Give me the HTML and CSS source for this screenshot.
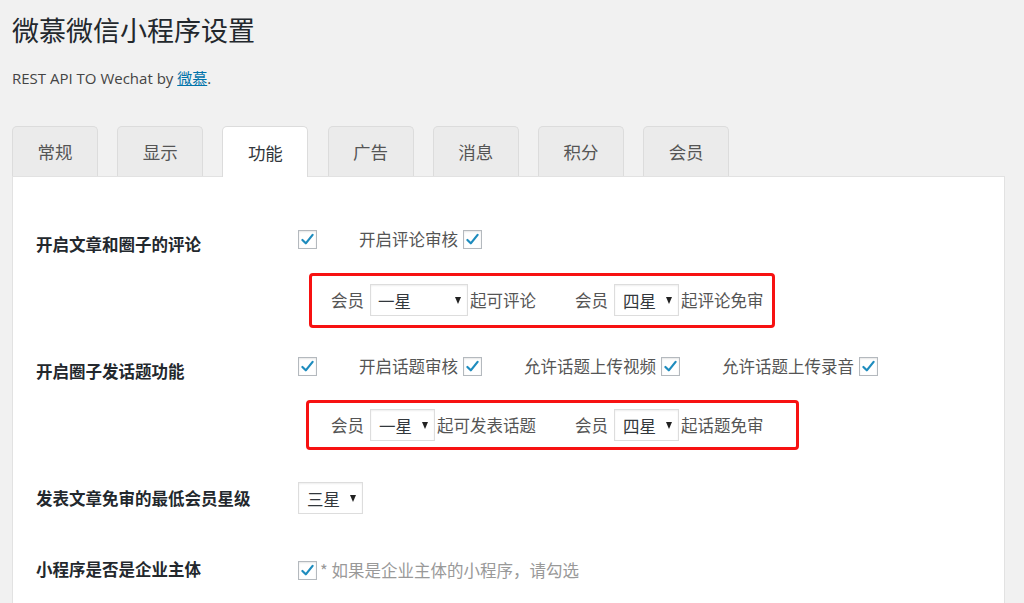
FILE: index.html
```html
<!DOCTYPE html>
<html>

<head>
    <meta charset="utf-8">
    <title>微慕微信小程序设置</title>
    <link rel="stylesheet" href="styles.css">
</head>

<body>
    <div class="wrap">
        <h1 class="page-title">微慕微信小程序设置</h1>
        <p class="page-sub">REST API TO Wechat by <a href="#">微慕</a>.</p>

        <div class="tabs">
            <div class="tab">常规</div>
            <div class="tab">显示</div>
            <div class="tab tab-active">功能</div>
            <div class="tab">广告</div>
            <div class="tab">消息</div>
            <div class="tab">积分</div>
            <div class="tab">会员</div>
        </div>

        <div class="panel">
            <!-- 评论 -->
            <div class="form-row row-comment">
                <div class="form-label">开启文章和圈子的评论</div>
                <div class="form-field">
                    <div class="field-line">
                        <span class="checkbox"><svg viewBox="0 0 20 20" width="17" height="17"><path d="M4 10.5 L8 14.5 L16 4.5" fill="none" stroke="#1e8cbe" stroke-width="2.6" stroke-linecap="round" stroke-linejoin="round"/></svg></span>
                        <span class="opt">开启评论审核<span class="checkbox"><svg viewBox="0 0 20 20" width="17" height="17"><path d="M4 10.5 L8 14.5 L16 4.5" fill="none" stroke="#1e8cbe" stroke-width="2.6" stroke-linecap="round" stroke-linejoin="round"/></svg></span></span>
                    </div>
                    <div class="mark mark-one">
                        <div class="member">会员<span class="select sel-wide"><span>一星</span><i class="arrow"></i></span>起可评论</div>
                        <div class="member">会员<span class="select"><span>四星</span><i class="arrow"></i></span>起评论免审</div>
                    </div>
                </div>
            </div>

            <!-- 话题 -->
            <div class="form-row row-topic">
                <div class="form-label">开启圈子发话题功能</div>
                <div class="form-field">
                    <div class="field-line">
                        <span class="checkbox"><svg viewBox="0 0 20 20" width="17" height="17"><path d="M4 10.5 L8 14.5 L16 4.5" fill="none" stroke="#1e8cbe" stroke-width="2.6" stroke-linecap="round" stroke-linejoin="round"/></svg></span>
                        <span class="opt">开启话题审核<span class="checkbox"><svg viewBox="0 0 20 20" width="17" height="17"><path d="M4 10.5 L8 14.5 L16 4.5" fill="none" stroke="#1e8cbe" stroke-width="2.6" stroke-linecap="round" stroke-linejoin="round"/></svg></span></span>
                        <span class="opt">允许话题上传视频<span class="checkbox"><svg viewBox="0 0 20 20" width="17" height="17"><path d="M4 10.5 L8 14.5 L16 4.5" fill="none" stroke="#1e8cbe" stroke-width="2.6" stroke-linecap="round" stroke-linejoin="round"/></svg></span></span>
                        <span class="opt">允许话题上传录音<span class="checkbox"><svg viewBox="0 0 20 20" width="17" height="17"><path d="M4 10.5 L8 14.5 L16 4.5" fill="none" stroke="#1e8cbe" stroke-width="2.6" stroke-linecap="round" stroke-linejoin="round"/></svg></span></span>
                    </div>
                    <div class="mark mark-two">
                        <div class="member">会员<span class="select"><span>一星</span><i class="arrow"></i></span>起可发表话题</div>
                        <div class="member">会员<span class="select"><span>四星</span><i class="arrow"></i></span>起话题免审</div>
                    </div>
                </div>
            </div>

            <!-- 免审 -->
            <div class="form-row row-level">
                <div class="form-label">发表文章免审的最低会员星级</div>
                <div class="form-field">
                    <span class="select"><span>三星</span><i class="arrow"></i></span>
                </div>
            </div>

            <!-- 企业主体 -->
            <div class="form-row row-company">
                <div class="form-label">小程序是否是企业主体</div>
                <div class="form-field">
                    <div class="field-line">
                        <span class="checkbox"><svg viewBox="0 0 20 20" width="17" height="17"><path d="M4 10.5 L8 14.5 L16 4.5" fill="none" stroke="#1e8cbe" stroke-width="2.6" stroke-linecap="round" stroke-linejoin="round"/></svg></span>
                        <span class="desc">* 如果是企业主体的小程序，请勾选</span>
                    </div>
                </div>
            </div>
        </div>
    </div>
</body>

</html>
```

FILE: styles.css
```css
html,
body {
    margin: 0;
    padding: 0;
    background: #f1f1f1;
    height: 100%;
    overflow: hidden;
}

body {
    font-family: "Noto Sans CJK SC", "Noto Sans", sans-serif;
    color: #444;
}

.wrap {
    padding: 12px 0 0 12px;
}

.page-title {
    margin: 0;
    font-size: 27px;
    font-weight: 400;
    line-height: 36px;
    color: #23282d;
}

.page-sub {
    margin: 19px 0 0;
    font-size: 15px;
    line-height: 22px;
    color: #444;
    font-family: "Open Sans", "Noto Sans CJK SC", sans-serif;
}

.page-sub a {
    color: #0073aa;
}

.tabs {
    display: flex;
    gap: 19.2px;
    margin-top: 37px;
    position: relative;
    z-index: 1;
}

.tab {
    width: 86px;
    height: 50px;
    box-sizing: border-box;
    border: 1px solid #dcdcdc;
    border-bottom: none;
    border-radius: 5px 5px 0 0;
    background: #ebebeb;
    color: #555;
    font-size: 17.5px;
    display: flex;
    align-items: center;
    justify-content: center;
}

.tab-active {
    background: #fff;
    height: 51px;
    margin-bottom: -1px;
    color: #32373c;
}

.panel {
    width: 993px;
    box-sizing: border-box;
    background: #fff;
    border: 1px solid #e2e2e2;
    border-bottom: none;
    padding-top: 50px;
    height: 600px;
}

.form-row {
    display: flex;
}

.form-label {
    width: 285px;
    box-sizing: border-box;
    padding-left: 23px;
    font-size: 16.5px;
    font-weight: 700;
    line-height: 24px;
    color: #23282d;
}

.form-field {
    font-size: 16.5px;
    color: #555;
}

.field-line {
    display: flex;
    align-items: center;
    height: 24px;
}

.row-comment .form-label,
.row-topic .form-label {
    padding-top: 4.5px;
}

.row-topic {
    margin-top: 26px;
}

.row-level {
    margin-top: 32px;
}

.row-level .form-label {
    padding-top: 4px;
}

.row-level .select {
    margin-left: 0;
}

.row-company {
    margin-top: 44px;
}

.row-company .form-label {
    margin-top: -1px;
}

.checkbox {
    width: 19px;
    height: 19px;
    box-sizing: border-box;
    border: 1px solid #b4b9be;
    box-shadow: inset 0 1px 2px rgba(0, 0, 0, .1);
    background: #fff;
    display: inline-flex;
    align-items: center;
    justify-content: center;
    vertical-align: middle;
}

.opt {
    margin-left: 42px;
    display: inline-flex;
    align-items: center;
    gap: 5px;
    white-space: nowrap;
}

.desc {
    margin-left: 3px;
    color: #999;
}

.mark {
    display: flex;
    align-items: center;
    box-sizing: border-box;
    border: 3px solid #f71111;
    border-radius: 4px;
    white-space: nowrap;
}

.mark-one {
    width: 466px;
    height: 55px;
    margin: 22px 0 0 11px;
    padding: 0 0 1px 19px;
}

.mark-two {
    width: 493px;
    height: 50px;
    margin: 22px 0 0 8px;
    padding: 0 0 0 22px;
}

.member {
    display: flex;
    align-items: center;
}

.member + .member {
    margin-left: 39px;
}

.select {
    display: inline-flex;
    align-items: center;
    justify-content: space-between;
    width: 65px;
    height: 32px;
    box-sizing: border-box;
    padding: 2px 6px 0 8px;
    margin: 0 2px 0 6px;
    border: 1px solid #ddd;
    box-shadow: inset 0 1px 2px rgba(0, 0, 0, .07);
    background: #fff;
    color: #32373c;
    font-size: 16.5px;
}

.sel-wide {
    width: 98px;
    padding-left: 7px;
}

.arrow {
    width: 0;
    height: 0;
    border-left: 3.5px solid transparent;
    border-right: 3.5px solid transparent;
    border-top: 7px solid #222;
    margin-top: -2px;
}
```
